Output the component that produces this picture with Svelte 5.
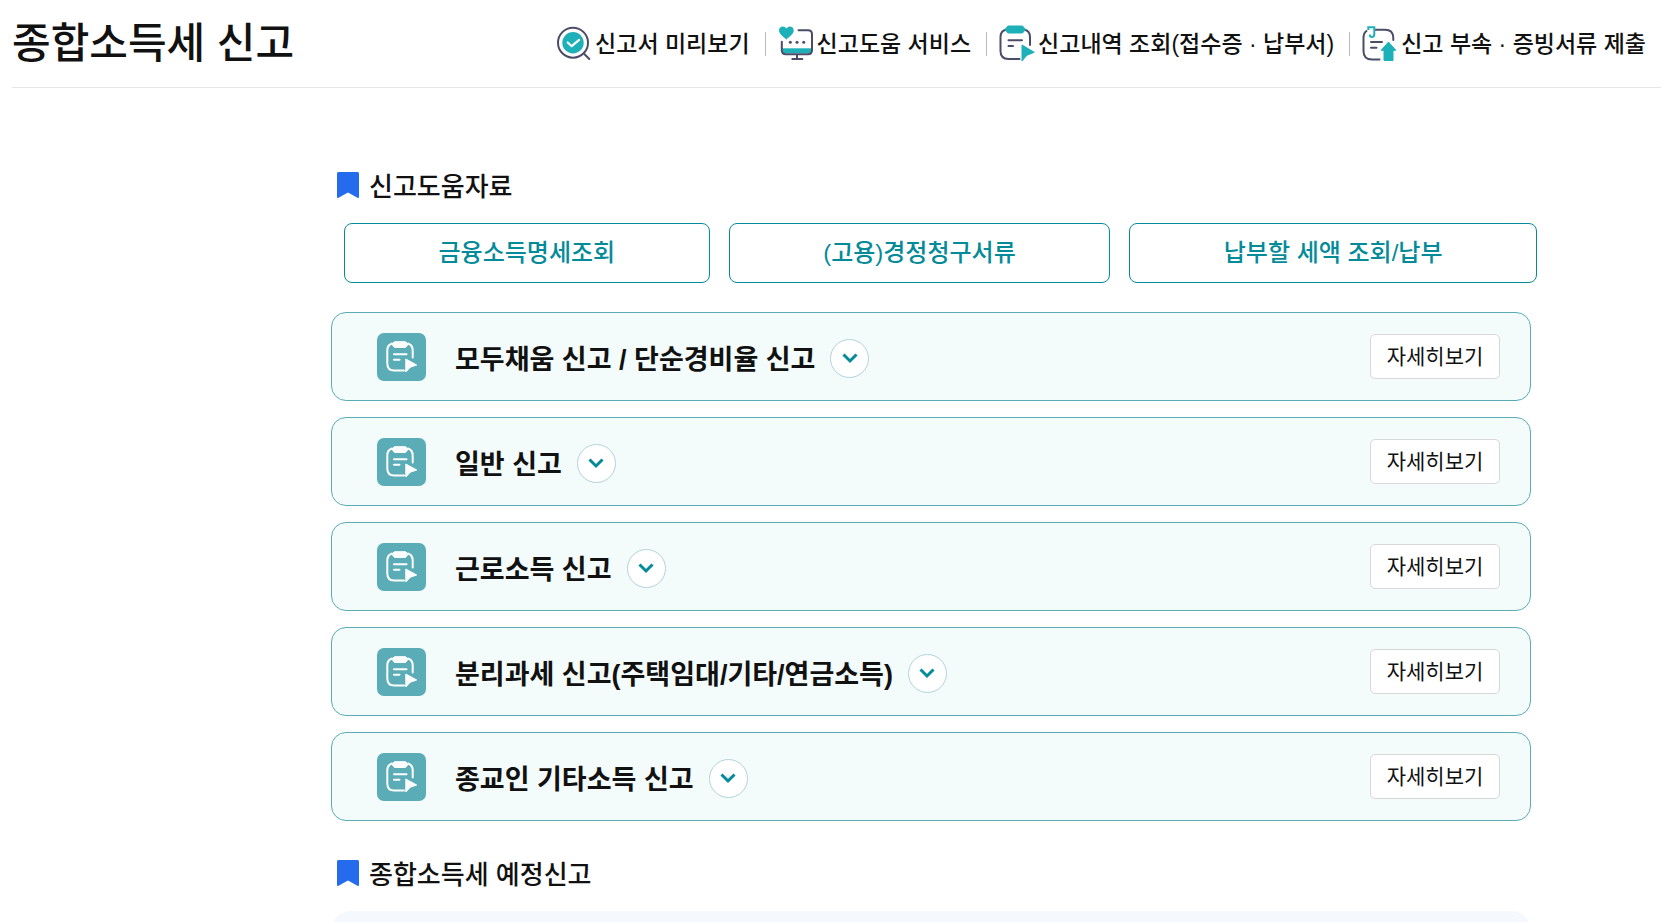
<script>
    const tabs = ['금융소득명세조회', '(고용)경정청구서류', '납부할 세액 조회/납부'];

    let reports = $state([
        { id: 'simple', title: '모두채움 신고 / 단순경비율 신고', open: false },
        { id: 'general', title: '일반 신고', open: false },
        { id: 'wage', title: '근로소득 신고', open: false },
        { id: 'separate', title: '분리과세 신고(주택임대/기타/연금소득)', open: false },
        { id: 'religion', title: '종교인 기타소득 신고', open: false }
    ]);

    function toggle(report) {
        report.open = !report.open;
    }
</script>

{#snippet bookmark()}
    <svg class="bookmark" viewBox="0 0 22 26" aria-hidden="true">
        <path d="M1.5 0h19A1.5 1.5 0 0 1 22 1.500V25q0 1.500-1.500.700L11 20.500 1.500 25.700Q0 26.500 0 25V1.500A1.500 1.500 0 0 1 1.500 0z" fill="#256bee" />
    </svg>
{/snippet}

<header>
    <h1>종합소득세 신고</h1>
    <nav>
        <a href="#preview">
            <svg viewBox="0 0 36 36" aria-hidden="true">
                <circle cx="17" cy="16.700" r="15" class="line" />
                <circle cx="17" cy="16.700" r="10.700" class="teal" />
                <path d="M11.700 16.500l4 3.700 7.400-6.300" fill="none" stroke="#fff" stroke-width="2.200" stroke-linecap="round" stroke-linejoin="round" />
                <path d="M28.300 28l5 5" class="line" />
            </svg>
            신고서 미리보기
        </a>
        <a href="#service">
            <svg viewBox="0 0 36 36" aria-hidden="true">
                <path d="M4.300 22.300h29.500v5h-29.500z" class="teal" />
                <path d="M20.500 4.300h9.500q4 0 4 4v16q0 4-4 4H7.800q-4 0-4-4v-8.500" class="line" />
                <path d="M19 29v4M14.300 33h10" class="line" />
                <path d="M8.400 13.400C4 10 1 7.500 1 4.300 1 .200 6.300-1.200 8.400 2.600 10.500-1.200 15.700.200 15.700 4.300c0 3.200-3 5.700-7.300 9.100z" class="teal" />
                <g fill="#4b4d68">
                    <circle cx="12.300" cy="16.300" r="1.500" />
                    <circle cx="19" cy="16.300" r="1.500" />
                    <circle cx="25.700" cy="16.300" r="1.500" />
                </g>
            </svg>
            신고도움 서비스
        </a>
        <a href="#history">
            <svg viewBox="0 0 36 36" aria-hidden="true">
                <path d="M7 3.500Q1.500 5 1.500 11v14q0 8 8 8h11M25.500 3.500Q31 5 31 11v8" class="line" />
                <path d="M9 0h14.500l3 3.500-3 3.500H9L6 3.500z" class="teal" stroke="#1eb0b8" stroke-linejoin="round" />
                <path d="M9.500 14.300h13.500M9.500 20h4.500" class="line" />
                <path d="M23 19l12.300 7.300-7.500 3L23 35z" class="teal" stroke="#1eb0b8" stroke-linejoin="round" />
            </svg>
            신고내역 조회(접수증 · 납부서)
        </a>
        <a href="#attach">
            <svg viewBox="0 0 36 36" aria-hidden="true">
                <path d="M4.500 5Q1.500 7 1.500 12v13q0 8.500 8.500 8.500h7.500M13 3.700h10q8.300 0 8.300 8.300v2" class="line" />
                <path d="M6.300 4V1.200h6V8q0 3-2.500 3Q7.800 11 7.800 8.500" fill="none" stroke="#1eb0b8" stroke-width="2" />
                <path d="M9 16h11M9 21.700h5.500" class="line" />
                <path d="M26.500 16l7.300 8.300H31V34.500h-9V24.300h-2.800z" class="teal" stroke="#1eb0b8" stroke-linejoin="round" />
            </svg>
            신고 부속 · 증빙서류 제출
        </a>
    </nav>
</header>

<main>
    <h2>{@render bookmark()}신고도움자료</h2>

    <div class="tabs">
        {#each tabs as tab}
            <button>{tab}</button>
        {/each}
    </div>

    <ul class="reports">
        {#each reports as report (report.id)}
            <li>
                <svg class="badge" viewBox="0 0 49 48" aria-hidden="true">
                    <rect width="49" height="48" rx="7" fill="#5aacb6" />
                    <g fill="none" stroke="#fff" stroke-width="2" stroke-linecap="round">
                        <path d="M15 10.500q-4.700 1.500-4.700 7v13q0 7 7 7H27M31 10.500q4.700 1.500 4.700 7v7" />
                        <path d="M17 21.300h12.500M17 26.700h5.500" />
                    </g>
                    <g fill="#fff" stroke="#fff" stroke-linejoin="round">
                        <path d="M17.500 8.700h11l2.700 2.500-2.700 3.300h-11l-2.700-3.300z" />
                        <path d="M28.800 26l10.900 6-6.400 2.200-4.500 4.800z" />
                    </g>
                </svg>
                <h3>{report.title}</h3>
                <button class="toggle" aria-label="{report.title} 펼치기" aria-expanded={report.open} onclick={() => toggle(report)}>
                    <svg class:open={report.open} viewBox="0 0 16 12" aria-hidden="true">
                        <path d="M1.500 2.500L8 9l6.500-6.500" fill="none" stroke="#048b99" stroke-width="3" />
                    </svg>
                </button>
                <button class="detail">자세히보기</button>
            </li>
        {/each}
    </ul>

    <h2>{@render bookmark()}종합소득세 예정신고</h2>
    <section class="panel" aria-label="종합소득세 예정신고"></section>
</main>

<style>
    :global(body) {
        background: #fff;
        color: #111;
        font-family: "Liberation Sans", "Noto Sans CJK KR", sans-serif;
        overflow-x: hidden;
    }

    h1, h2, h3, ul {
        margin: 0;
        padding: 0;
    }

    button {
        box-sizing: border-box;
        font-family: inherit;
        line-height: 36px;
        cursor: pointer;
        padding: 0;
    }

    header {
        display: flex;
        justify-content: space-between;
        align-items: center;
        height: 87px;
        margin-left: 12px;
        padding-right: 15px;
        border-bottom: 1px solid #e5e5e5;
    }

    h1 {
        font-size: 42px;
        font-weight: 500;
        line-height: 60px;
        white-space: nowrap;
    }

    nav {
        display: flex;
    }

    nav a {
        display: flex;
        align-items: center;
        gap: 3px;
        color: #111;
        font-size: 23px;
        font-weight: 500;
        line-height: 36px;
        text-decoration: none;
        white-space: nowrap;
    }

    nav a + a::before {
        content: '';
        width: 1px;
        height: 24px;
        margin: 0 9px 0 15px;
        background: #bbb;
    }

    nav svg {
        width: 36px;
        height: 36px;
        overflow: visible;
    }

    .line {
        fill: none;
        stroke: #4b4d68;
        stroke-width: 2;
        stroke-linecap: round;
    }

    .teal {
        fill: #1eb0b8;
    }

    main {
        padding: 81px 130px 0 331px;
    }

    h2 {
        display: flex;
        align-items: center;
        gap: 10px;
        padding-left: 6px;
        font-size: 26px;
        font-weight: 500;
        line-height: 36px;
    }

    .bookmark {
        width: 22px;
        height: 26px;
        margin-bottom: 4px;
    }

    .tabs {
        display: flex;
        gap: 19px;
        margin: 18px -6px 29px 13px;
    }

    .tabs button {
        flex: 1 1 auto;
        height: 60px;
        border: 1px solid #048b99;
        border-radius: 8px;
        background: #fff;
        color: #048b99;
        font-size: 24px;
        font-weight: 500;
    }

    .reports {
        display: flex;
        flex-direction: column;
        gap: 16px;
        margin-bottom: 36px;
        list-style: none;
    }

    .reports li {
        box-sizing: border-box;
        display: flex;
        align-items: center;
        height: 89px;
        padding: 0 30px 0 45px;
        border: 1px solid #5aacb6;
        border-radius: 15px;
        background: #f3fbfb;
    }

    .badge {
        width: 49px;
        height: 48px;
        margin-right: 29px;
    }

    h3 {
        padding-top: 6px;
        font-size: 27px;
        font-weight: 700;
        line-height: 40px;
    }

    .toggle {
        display: flex;
        align-items: center;
        justify-content: center;
        width: 39px;
        height: 39px;
        margin: 3px 0 0 15px;
        border: 1px solid #b4d4d8;
        border-radius: 50%;
        background: #fff;
    }

    .toggle svg {
        width: 16px;
        height: 12px;
    }

    .toggle svg.open {
        transform: rotate(180deg);
    }

    .detail {
        width: 130px;
        height: 45px;
        margin-left: auto;
        border: 1px solid #d8d8d8;
        border-radius: 5px;
        background: #fff;
        color: #111;
        font-size: 21px;
    }

    .panel {
        height: 120px;
        margin-top: 18px;
        border-radius: 20px;
        background: #f5f9fe;
    }
</style>
